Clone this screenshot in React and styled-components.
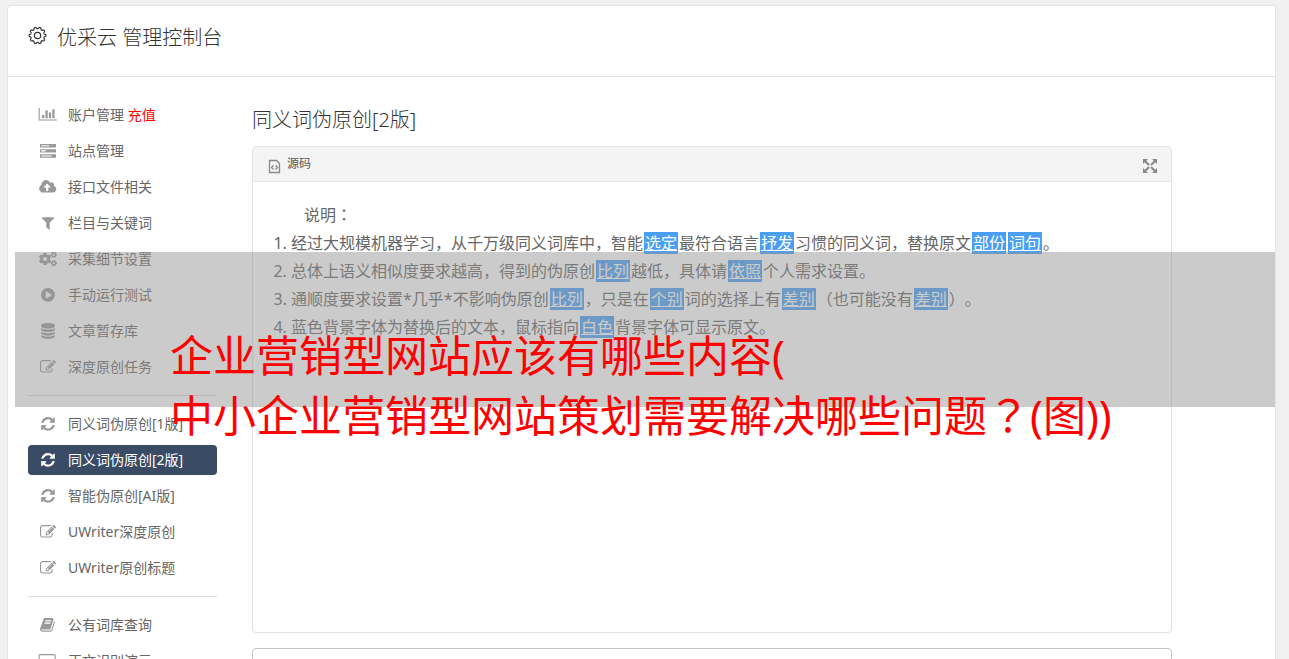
import React from "react";
import styled, { createGlobalStyle } from "styled-components";
import { FaCogs } from "react-icons/fa";

const Global = createGlobalStyle`
  * { box-sizing: border-box; }
  body {
    margin: 0;
    background: #f0f0f0;
    color: #666;
    font-family: "Noto Sans", "Noto Sans CJK SC", sans-serif;
    font-weight: 400;
    font-size: 14px;
    text-spacing-trim: space-all;
  }
`;

const Page = styled.div`
  position: relative;
  height: 100vh;
  overflow: hidden;
  padding: 5px 13px 0 7px;
`;

const Card = styled.div`
  background: #fff;
  border: 1px solid #e4e4e4;
  border-radius: 4px;
  min-height: 100vh;
`;

const Header = styled.header`
  display: flex;
  align-items: flex-start;
  gap: 10px;
  height: 71px;
  padding: 17px 20px;
  border-bottom: 1px solid #e4e4e4;
  color: #333;
  svg { margin-top: 3px; }
`;

const Brand = styled.h1`
  margin: 0;
  font-size: 20px;
  line-height: 30px;
  font-weight: 300;
`;

const Body = styled.div`
  display: flex;
  align-items: flex-start;
  gap: 35px;
  padding: 23px 103px 0 20px;
`;

const Nav = styled.nav`
  flex: 0 0 189px;
`;

const Group = styled.ul`
  display: flex;
  flex-direction: column;
  gap: 6px;
  list-style: none;
  margin: 0;
  padding: 0;
  & + & {
    margin-top: 13px;
    padding-top: 13px;
    border-top: 1px solid #dcdcdc;
  }
`;

const NavLink = styled.a`
  display: flex;
  align-items: center;
  gap: 10px;
  height: 30px;
  padding: 0 10px;
  border-radius: 4px;
  line-height: 30px;
  text-decoration: none;
  white-space: pre;
  color: ${(p) => (p.$active ? "#fff" : "#666")};
  background: ${(p) => (p.$active ? "#3a4b66" : "transparent")};
  svg {
    flex: none;
    fill: ${(p) => (p.$active ? "#fff" : "#999")};
  }
`;

const Recharge = styled.span`
  color: #f00;
`;

const Main = styled.main`
  flex: 1;
  min-width: 0;
`;

const Title = styled.h2`
  margin: 0 0 6px;
  font-size: 20px;
  line-height: 40px;
  font-weight: 300;
  color: #333;
`;

const Panel = styled.section`
  min-height: 487px;
  border: 1px solid #e4e4e4;
  border-radius: 4px;
`;

const PanelBar = styled.div`
  display: flex;
  align-items: center;
  justify-content: space-between;
  height: 35px;
  padding: 0 14px;
  background: #f4f4f4;
  border-bottom: 1px solid #e4e4e4;
  border-radius: 3px 3px 0 0;
`;

const BarButton = styled.button`
  display: flex;
  align-items: center;
  gap: 6px;
  border: 0;
  padding: 0;
  background: none;
  color: #555;
  font: inherit;
  font-size: 12px;
  line-height: 18px;
  svg { margin-top: 4px; }
`;

const Article = styled.div`
  padding: 19px;
  font-size: 16px;
  line-height: 28px;
  p { margin: 0; padding-left: 32px; }
  ol { margin: 0; padding-left: 19px; }
`;

const Swap = styled.u`
  margin: 0 1px;
  padding: 0 1px;
  background: #4a9ff5;
  color: #fff;
`;

const Centered = styled.span`
  font-family: "Noto Sans CJK JP", sans-serif;
  line-height: 1;
`;

const Output = styled.textarea`
  display: block;
  width: 100%;
  height: 120px;
  margin-top: 15px;
  border: 1px solid #c4c4c4;
  border-radius: 4px;
  resize: none;
`;

const Banner = styled.div`
  position: absolute;
  top: 252px;
  left: 15px;
  right: 14px;
  height: 155px;
  padding: 74px 0 0 155px;
  background: rgba(147, 147, 147, 0.48);
  color: #f00;
  font-size: 43px;
  line-height: 60px;
  white-space: nowrap;
`;

const PATHS = {
  chart: "M0 128h128v1280h1920v128H0zM384 896h256v384H384zM768 384h256v896H768zM1152 640h256v640h-256zM1536 256h256v1024h-256z",
  server:
    "M0 128h1792v384H0zM128 256v128h896V256zM0 704h1792v384H0zM128 832v128h512V832zM0 1280h1792v384H0zM128 1408v128h1152v-128z",
  upload:
    "M1280 928q0-14-9-23l-352-352q-9-9-23-9t-23 9l-351 351q-10 12-10 24 0 14 9 23t23 9h224v352q0 13 9.5 22.5t22.5 9.5h192q13 0 22.5-9.5t9.5-22.5v-352h224q13 0 22.5-9.5t9.5-22.5zm640 224q0 159-112.5 271.5t-271.5 112.5h-1088q-185 0-316.5-131.5t-131.5-316.5q0-130 70-240t188-165q-2-30-2-43 0-212 150-362t362-150q156 0 285.5 87t188.5 231q71-62 166-62 106 0 181 75t75 181q0 76-41 138 130 31 213.5 135.5t83.5 238.5z",
  filter:
    "M1595 295q17 41-14 70l-493 493v742q0 42-39 59-13 5-25 5-27 0-45-19l-256-256q-19-19-19-45v-486l-493-493q-31-29-14-70 17-39 59-39h1280q42 0 59 39z",
  play: "M896 128q209 0 385.5 103t279.5 279.5 103 385.5-103 385.5-279.5 279.5-385.5 103-385.5-103-279.5-279.5-103-385.5 103-385.5 279.5-279.5 385.5-103zm384 823q32-18 32-55t-32-55l-544-320q-31-19-64-1-32 19-32 56v640q0 37 32 56 16 8 32 8 17 0 32-9z",
  database:
    "M896 768q237 0 443-43t325-127v170q0 69-103 128t-280 93.5-385 34.5-385-34.5-280-93.5-103-128v-170q119 84 325 127t443 43zm0 768q237 0 443-43t325-127v170q0 69-103 128t-280 93.5-385 34.5-385-34.5-280-93.5-103-128v-170q119 84 325 127t443 43zm0-384q237 0 443-43t325-127v170q0 69-103 128t-280 93.5-385 34.5-385-34.5-280-93.5-103-128v-170q119 84 325 127t443 43zm0-1152q208 0 385 34.5t280 93.5 103 128v128q0 69-103 128t-280 93.5-385 34.5-385-34.5-280-93.5-103-128v-128q0-69 103-128t280-93.5 385-34.5z",
  edit: "M888 1184l116-116-152-152-116 116v56h96v96h56zm440-720q-16-16-33 1l-350 350q-17 17-1 33t33-1l350-350q17-17 1-33zm80 594v190q0 119-84.5 203.5t-203.5 84.5h-832q-119 0-203.5-84.5t-84.5-203.5v-832q0-119 84.5-203.5t203.5-84.5h832q63 0 117 25 15 7 18 23 3 17-9 29l-49 49q-14 14-32 8-23-6-45-6h-832q-66 0-113 47t-47 113v832q0 66 47 113t113 47h832q66 0 113-47t47-113v-126q0-13 9-22l64-64q15-15 35-7t20 29zm-96-738l288 288-672 672h-288v-288zm444 132l-92 92-288-288 92-92q28-28 68-28t68 28l152 152q28 28 28 68t-28 68z",
  refresh:
    "M1639 1056q0 5-1 7-64 268-268 434.5t-478 166.5q-146 0-282.5-55t-243.5-157l-129 129q-19 19-45 19t-45-19-19-45v-448q0-26 19-45t45-19h448q26 0 45 19t19 45-19 45l-137 137q71 66 161 102t187 36q134 0 250-65t186-179q11-17 53-117 8-23 30-23h192q13 0 22.5 9.5t9.5 22.5zm25-800v448q0 26-19 45t-45 19h-448q-26 0-45-19t-19-45 19-45l138-138q-148-137-349-137-134 0-250 65t-186 179q-11 17-53 117-8 23-30 23h-199q-13 0-22.5-9.5t-9.5-22.5v-7q65-268 270-434.5t480-166.5q146 0 284 55.5t245 156.5l130-129q19-19 45-19t45 19 19 45z",
  book: "M1639 478q40 57 18 129l-275 906q-19 64-76.5 107.5t-122.5 43.5h-923q-77 0-148.5-53.5t-99.5-131.5q-24-67-2-127 0-4 3-27t4-37q1-8-3-21.5t-3-19.5q2-11 8-21t16.5-23.5 16.5-23.5q23-38 45-91.5t30-91.5q3-10 .5-30t-.5-28q3-11 17-28t17-23q21-36 42-92t25-90q1-9-2.5-32t.5-28q4-13 22-30.5t22-22.5q19-26 42.5-84.5t27.5-96.5q1-8-3-25.5t-2-26.5q2-8 9-18t18-23 17-21q8-12 16.5-30.5t15-35 16-36 19.5-32 26.5-23.5 36-11.5 47.5 5.5l-1 3q38-9 51-9h761q74 0 114 56t18 130l-274 906q-36 119-71.5 153.5t-128.5 34.5h-869q-27 0-38 15-11 16-1 43 24 70 144 70h923q29 0 56-15.5t35-41.5l300-987q7-22 5-57 38 15 59 43zm-1064 2q-4 13 2 22.5t20 9.5h608q13 0 25.5-9.5t16.5-22.5l21-64q4-13-2-22.5t-20-9.5h-608q-13 0-25.5 9.5t-16.5 22.5zm-83 256q-4 13 2 22.5t20 9.5h608q13 0 25.5-9.5t16.5-22.5l21-64q4-13-2-22.5t-20-9.5h-608q-13 0-25.5 9.5t-16.5 22.5z",
  desktop:
    "M160 128h1600q66 0 113 47t47 113v1088q0 66-47 113t-113 47h-544l64 256H640l64-256H160q-66 0-113-47T0 1376V288q0-66 47-113t113-47zM128 288v832h1664V288l-32-32H160z",
};

const LEFT_EDGES = { chart: -64, desktop: -64, upload: -128 };

function Icon({ name }) {
  if (name === "cogs") return <FaCogs size={20} viewBox="-38 0 716 512" />;
  return (
    <svg width="20" height="18" viewBox={`${LEFT_EDGES[name] ?? -224} -100 2240 2016`} aria-hidden="true">
      <path d={PATHS[name]} fillRule="evenodd" />
    </svg>
  );
}

const gearPath = (() => {
  const steps = 120;
  const points = [];
  for (let i = 0; i < steps; i += 1) {
    const a = (i / steps) * Math.PI * 2;
    const r = 7.6 + 0.8 * Math.tanh(2 * Math.cos(a * 10 + Math.PI));
    points.push(`${(9.5 + r * Math.sin(a)).toFixed(2)} ${(9.5 - r * Math.cos(a)).toFixed(2)}`);
  }
  return `M${points.join("L")}Z`;
})();

const GROUPS = [
  [
    ["chart", "账户管理", "充值"],
    ["server", "站点管理"],
    ["upload", "接口文件相关"],
    ["filter", "栏目与关键词"],
    ["cogs", "采集细节设置"],
    ["play", "手动运行测试"],
    ["database", "文章暂存库"],
    ["edit", "深度原创任务"],
  ],
  [
    ["refresh", "同义词伪原创[1版]"],
    ["refresh", "同义词伪原创[2版]"],
    ["refresh", "智能伪原创[AI版]"],
    ["edit", "UWriter深度原创"],
    ["edit", "UWriter原创标题"],
  ],
  [
    ["book", "公有词库查询"],
    ["desktop", "正文识别演示"],
  ],
];
const ACTIVE = "同义词伪原创[2版]";

export default function App() {
  return (
    <Page>
      <Global />
      <Card>
        <Header>
          <svg width="19" height="19" viewBox="0 0 19 19" fill="none" stroke="#333" strokeWidth="1.2" aria-hidden="true">
            <path d={gearPath} />
            <circle cx="9.5" cy="9.5" r="3.2" />
          </svg>
          <Brand>优采云 管理控制台</Brand>
        </Header>
        <Body>
          <Nav>
            {GROUPS.map((items, i) => (
              <Group key={i}>
                {items.map(([icon, label, extra]) => (
                  <li key={label}>
                    <NavLink href="#" $active={label === ACTIVE}>
                      <Icon name={icon} />
                      <span>
                        {label}
                        {extra && <Recharge> {extra}</Recharge>}
                      </span>
                    </NavLink>
                  </li>
                ))}
              </Group>
            ))}
          </Nav>
          <Main>
            <Title>同义词伪原创[2版]</Title>
            <Panel>
              <PanelBar>
                <BarButton type="button">
                  <svg width="14" height="15" viewBox="0 0 14 15" fill="none" stroke="#888" aria-hidden="true">
                    <path strokeWidth="1.3" d="M2.5 1.5h7l3 3v9h-10z" />
                    <path strokeWidth="1.3" d="M6.500 6.500l-2 2 2 2M8.500 6.500l2 2-2 2" />
                  </svg>
                  源码
                </BarButton>
                <BarButton type="button" aria-label="全屏">
                  <svg width="14" height="14" viewBox="0 0 14 14" fill="#888" stroke="#888" strokeWidth="2" aria-hidden="true">
                    <path d="M2 2l4 4M12 2l-4 4M2 12l4-4M12 12l-4-4" />
                    <path stroke="none" d="M0 0h5L0 5zM14 0v5L9 0zM0 14V9l5 5zM14 14H9l5-5z" />
                  </svg>
                </BarButton>
              </PanelBar>
              <Article>
                <p>
                  说明<Centered>：</Centered>
                </p>
                <ol>
                  <li>
                    经过大规模机器学习，从千万级同义词库中，智能<Swap>选定</Swap>最符合语言<Swap>抒发</Swap>
                    习惯的同义词，替换原文<Swap>部份</Swap><Swap>词句</Swap>。
                  </li>
                  <li>
                    总体上语义相似度要求越高，得到的伪原创<Swap>比列</Swap>越低，具体请<Swap>依照</Swap>
                    个人需求设置。
                  </li>
                  <li>
                    通顺度要求设置*几乎*不影响伪原创<Swap>比列</Swap>，只是在<Swap>个别</Swap>词的选择上有
                    <Swap>差别</Swap>（也可能没有<Swap>差别</Swap>）。
                  </li>
                  <li>
                    蓝色背景字体为替换后的文本，鼠标指向<Swap>白色</Swap>背景字体可显示原文。
                  </li>
                </ol>
              </Article>
            </Panel>
            <Output aria-label="输出" />
          </Main>
        </Body>
      </Card>
      <Banner>
        企业营销型网站应该有哪些内容(
        <br />
        中小企业营销型网站策划需要解决哪些问题<Centered>？</Centered>(图))
      </Banner>
    </Page>
  );
}
